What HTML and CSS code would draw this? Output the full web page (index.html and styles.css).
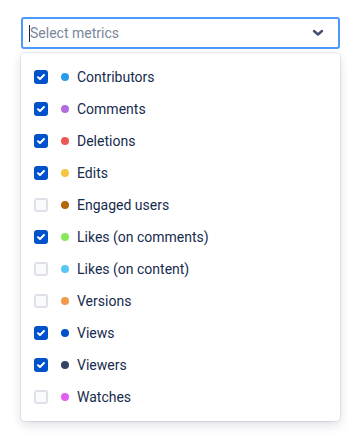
FILE: index.html
```html
<!DOCTYPE html>
<html>
<head>
  <link rel="stylesheet" href="styles.css">
</head>
<body>
  <div class="picker">
    <div class="control">
      <span class="caret"></span>
      <span class="placeholder">Select metrics</span>
      <svg class="chevron" width="12" height="8" viewBox="0 0 12 8">
        <path d="M2 2 L6 5.5 L10 2" fill="none" stroke="#42526e" stroke-width="2.4" stroke-linecap="round" stroke-linejoin="round"/>
      </svg>
    </div>

    <div class="menu" id="menu">
      <!-- options are added by the script below -->
    </div>
  </div>

  <script>
    const metrics = [
      { name: 'Contributors', color: '#2a9be6', checked: true },
      { name: 'Comments', color: '#b36ce0', checked: true },
      { name: 'Deletions', color: '#ef5656', checked: true },
      { name: 'Edits', color: '#f5c443', checked: true },
      { name: 'Engaged users', color: '#b5660a', checked: false },
      { name: 'Likes (on comments)', color: '#88e85a', checked: true },
      { name: 'Likes (on content)', color: '#55c6f5', checked: false },
      { name: 'Versions', color: '#f2994a', checked: false },
      { name: 'Views', color: '#0052cc', checked: true },
      { name: 'Viewers', color: '#344563', checked: true },
      { name: 'Watches', color: '#e35ef0', checked: false }
    ];

    const menu = document.getElementById('menu');

    metrics.forEach(m => {
      const row = document.createElement('div');
      row.className = 'option';

      const box = document.createElement('span');
      box.className = m.checked ? 'checkbox checked' : 'checkbox';
      if (m.checked) {
        box.innerHTML = '<svg width="14" height="14" viewBox="0 0 14 14"><path d="M4 7.2 L6 9 L10 5" fill="none" stroke="#fff" stroke-width="2" stroke-linecap="round" stroke-linejoin="round"/></svg>';
      }

      const dot = document.createElement('span');
      dot.className = 'dot';
      dot.style.background = m.color;

      const label = document.createElement('span');
      label.className = 'label';
      label.textContent = m.name;

      row.appendChild(box);
      row.appendChild(dot);
      row.appendChild(label);
      menu.appendChild(row);
    });
  </script>
</body>
</html>
```

FILE: styles.css
```css
body {
  font-family: Roboto, 'Noto Sans', sans-serif;
  margin: 0;
  padding: 17px 21px;
  background-color: #ffffff;
  color: #172b4d;
}

.picker {
  width: 319px;
}

.control {
  height: 32px;
  box-sizing: border-box;
  border: 2px solid #4c9aff;
  border-radius: 3px;
  display: flex;
  align-items: center;
  padding: 0 14px 0 6px;
}

.caret {
  width: 1px;
  height: 17px;
  background-color: #172b4d;
}

.placeholder {
  flex: 1;
  font-size: 14px;
  color: #7a869a;
}

.chevron {
  display: block;
}

.menu {
  margin-top: 4px;
  padding: 8px 0;
  border-radius: 4px;
  background-color: #ffffff;
  box-shadow: 0 0 0 1px rgba(9, 30, 66, 0.08), 0 4px 11px rgba(9, 30, 66, 0.14);
}

.option {
  height: 32px;
  display: flex;
  align-items: center;
  padding-left: 13px;
}

.checkbox {
  width: 14px;
  height: 14px;
  box-sizing: border-box;
  border-radius: 3px;
  border: 2px solid #dfe1e6;
  background-color: #fafbfc;
  margin-right: 13px;
}

.checkbox.checked {
  border: none;
  background-color: #0052cc;
}

.checkbox svg {
  display: block;
}

.dot {
  width: 8px;
  height: 8px;
  border-radius: 50%;
  margin-right: 8px;
}

.label {
  font-size: 14px;
  color: #172b4d;
}
```
